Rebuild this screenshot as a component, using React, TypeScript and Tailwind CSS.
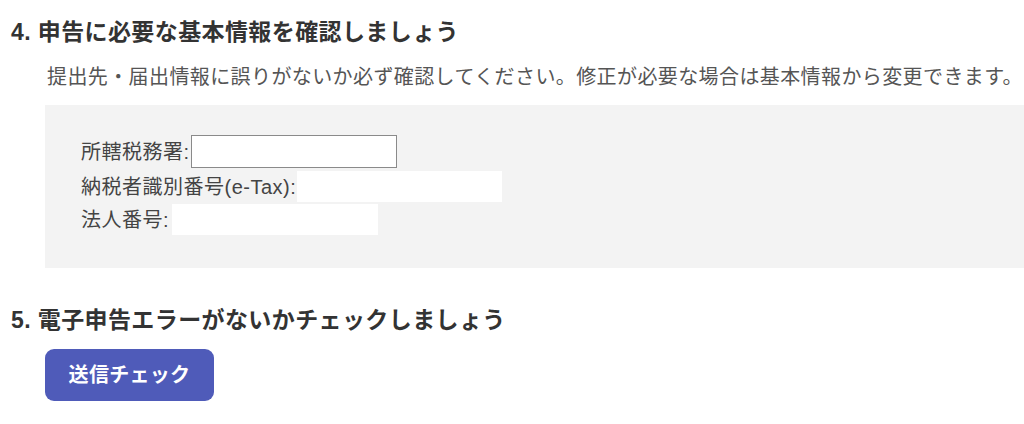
const font = "font-['Liberation_Sans','Noto_Sans_CJK_JP',sans-serif]"

function App() {
	return (
		<div className={`h-[424px] w-full overflow-hidden bg-white pl-[11px] pt-[17px] text-[#333] ${font}`}>
			<h2 className="text-[23px] font-bold leading-[30px] tracking-[0.4px] text-[#333]">
				4. 申告に必要な基本情報を確認しましょう
			</h2>
			<p className="ml-[36px] mr-[-8px] mt-[15px] whitespace-nowrap text-[20px] leading-[30px] tracking-[0.4px] text-[#555]">
				提出先・届出情報に誤りがないか必ず確認してください。修正が必要な場合は基本情報から変更できます。
			</p>
			<div className="ml-[34px] mt-[13px] h-[163px] w-[1000px] bg-[#f3f3f3] pl-[36px] pt-[30px] text-[20px] tracking-[0.5px] text-[#444]">
				<div className="flex h-[33px] items-center">
					<span className="leading-none">所轄税務署:</span>
					<input
						type="text"
						className="ml-[1px] h-[33px] w-[206px] border border-[#8a8a8a] bg-white outline-none"
					/>
				</div>
				<div className="mt-[3px] flex h-[31px] items-center">
					<span className="leading-none">納税者識別番号(e-Tax):</span>
					<div className="ml-[1px] h-[31px] w-[205px] bg-white" />
				</div>
				<div className="mt-[2px] flex h-[31px] items-center">
					<span className="leading-none">法人番号:</span>
					<div className="ml-[3px] h-[31px] w-[206px] bg-white" />
				</div>
			</div>
			<h2 className="mt-[37px] text-[23px] font-bold leading-[30px] tracking-[0.4px] text-[#333]">
				5. 電子申告エラーがないかチェックしましょう
			</h2>
			<button className="ml-[34px] mt-[14px] h-[52px] w-[169px] rounded-[9px] bg-[#4f5bb9] text-[20px] font-bold tracking-[0.3px] text-white">
				送信チェック
			</button>
		</div>
	)
}

export default App
